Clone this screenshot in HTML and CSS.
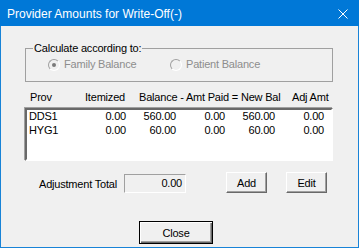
FILE: index.html
```html
<!DOCTYPE html>
<html>
<head>
    <title>Provider Amounts for Write-Off(-)</title>
    <link rel="stylesheet" href="styles.css">
</head>
<body>
    <div class="window">
        <div class="titlebar">
            <span class="title">Provider Amounts for Write-Off(-)</span>
            <svg class="close-x" width="10" height="10" viewBox="0 0 10 10">
                <path d="M0.5 0.5 L9.5 9.5 M9.5 0.5 L0.5 9.5" stroke="#fff" stroke-width="1" fill="none"/>
            </svg>
        </div>

        <div class="content">
            <fieldset class="group">
                <legend>Calculate according to:</legend>
                <div class="radios">
                    <label class="radio first"><span class="dot checked"></span>Family Balance</label>
                    <label class="radio"><span class="dot"></span>Patient Balance</label>
                </div>
            </fieldset>

            <div class="list-head">
                <span class="h-prov">Prov</span>
                <span class="h-item">Itemized</span>
                <span class="h-bal">Balance - Amt Paid = New Bal</span>
                <span class="h-adj">Adj Amt</span>
            </div>

            <div class="listbox">
                <div class="row">
                    <span class="prov">DDS1</span>
                    <span>0.00</span>
                    <span>560.00</span>
                    <span>0.00</span>
                    <span>560.00</span>
                    <span>0.00</span>
                </div>
                <div class="row">
                    <span class="prov">HYG1</span>
                    <span>0.00</span>
                    <span>60.00</span>
                    <span>0.00</span>
                    <span>60.00</span>
                    <span>0.00</span>
                </div>
            </div>

            <div class="adjust-row">
                <span class="adj-label">Adjustment Total</span>
                <span class="adj-box">0.00</span>
                <button class="btn btn-add">Add</button>
                <button class="btn btn-edit">Edit</button>
            </div>

            <div class="close-row">
                <button class="btn btn-default">Close</button>
            </div>
        </div>
    </div>
</body>
</html>
```

FILE: styles.css
```css
body {
    margin: 0;
    padding: 0;
    background-color: #f0f0f0;
    font-family: "Liberation Sans", Arial, sans-serif;
    font-size: 11px;
    color: #000;
}

.window {
    width: 359px;
    height: 248px;
    box-sizing: border-box;
    border: 1px solid #1883d7;
    border-top: none;
    background-color: #f0f0f0;
}

.titlebar {
    height: 26px;
    margin: 0 -1px;
    background-color: #0078d7;
    color: #fff;
    display: flex;
    align-items: center;
    justify-content: space-between;
    padding: 0 11px 0 7px;
}

.title {
    font-size: 12px;
    line-height: 26px;
    padding-top: 1px;
}

.close-x {
    display: block;
    margin-top: 1px;
}

.content {
    padding-left: 24px;
    letter-spacing: -0.2px;
}

/* group box */
.group {
    width: 308px;
    box-sizing: border-box;
    margin: 16px 0 0 0;
    padding: 3px 7px 10px 7px;
    border: 1px solid #a0a0a0;
    min-width: 0;
}

.group legend {
    padding: 0 1px;
    line-height: 13px;
}

.radios {
    display: flex;
    padding-left: 15px;
    line-height: 13px;
    color: #8d8d8d;
}

.radio {
    display: flex;
    align-items: center;
}

.radio.first {
    width: 122px;
}

.dot {
    width: 12px;
    height: 12px;
    box-sizing: border-box;
    border-radius: 50%;
    border: 1px solid #a0a0a0;
    border-right-color: #fff;
    border-bottom-color: #fff;
    background-color: #f0f0f0;
    margin-right: 4px;
    display: flex;
    align-items: center;
    justify-content: center;
}

.dot.checked::after {
    content: "";
    width: 4px;
    height: 4px;
    border-radius: 50%;
    background-color: #7a7a7a;
}

/* list */
.list-head {
    display: flex;
    margin-top: 9px;
    padding-left: 5px;
    line-height: 13px;
    white-space: nowrap;
}

.h-prov {
    width: 55px;
}

.h-item {
    width: 40px;
    text-align: right;
}

.h-bal {
    width: 153px;
    margin-left: 14px;
}

.listbox {
    width: 308px;
    height: 53px;
    box-sizing: border-box;
    margin-top: 4px;
    padding-left: 2px;
    background-color: #fff;
    border: 2px solid;
    border-color: #696969 #fff #fff #696969;
    box-shadow: -1px -1px 0 #a0a0a0;
}

.row {
    display: grid;
    grid-template-columns: 47px 50px 50px 49px 50px 49px;
    height: 14px;
    line-height: 13px;
    text-align: right;
}

.row .prov {
    text-align: left;
}

/* bottom */
.adjust-row {
    display: flex;
    align-items: flex-start;
    margin-top: 11px;
    padding-left: 14px;
    line-height: 13px;
}

.adj-label {
    width: 85px;
    margin-top: 6px;
}

.adj-box {
    width: 62px;
    height: 19px;
    box-sizing: border-box;
    margin-top: 2px;
    padding-right: 3px;
    text-align: right;
    line-height: 17px;
    border: 1px solid;
    border-color: #a0a0a0 #fff #fff #a0a0a0;
}

.btn {
    font-family: inherit;
    font-size: 11px;
    letter-spacing: -0.2px;
    color: #000;
    background-color: #f0f0f0;
    padding: 0;
    margin: 0;
    border: 1px solid;
    border-color: #fff #696969 #696969 #fff;
    box-shadow: inset -1px -1px 0 #a0a0a0;
    box-sizing: border-box;
}

.btn-add,
.btn-edit {
    width: 41px;
    height: 21px;
}

.btn-add {
    margin-left: 40px;
}

.btn-edit {
    margin-left: 19px;
}

.close-row {
    margin-top: 28px;
    padding-left: 114px;
}

.btn-default {
    width: 74px;
    height: 23px;
    border: 1px solid #000;
    box-shadow: inset 1px 1px 0 #fff, inset -1px -1px 0 #696969, inset -2px -2px 0 #a0a0a0;
}
```
